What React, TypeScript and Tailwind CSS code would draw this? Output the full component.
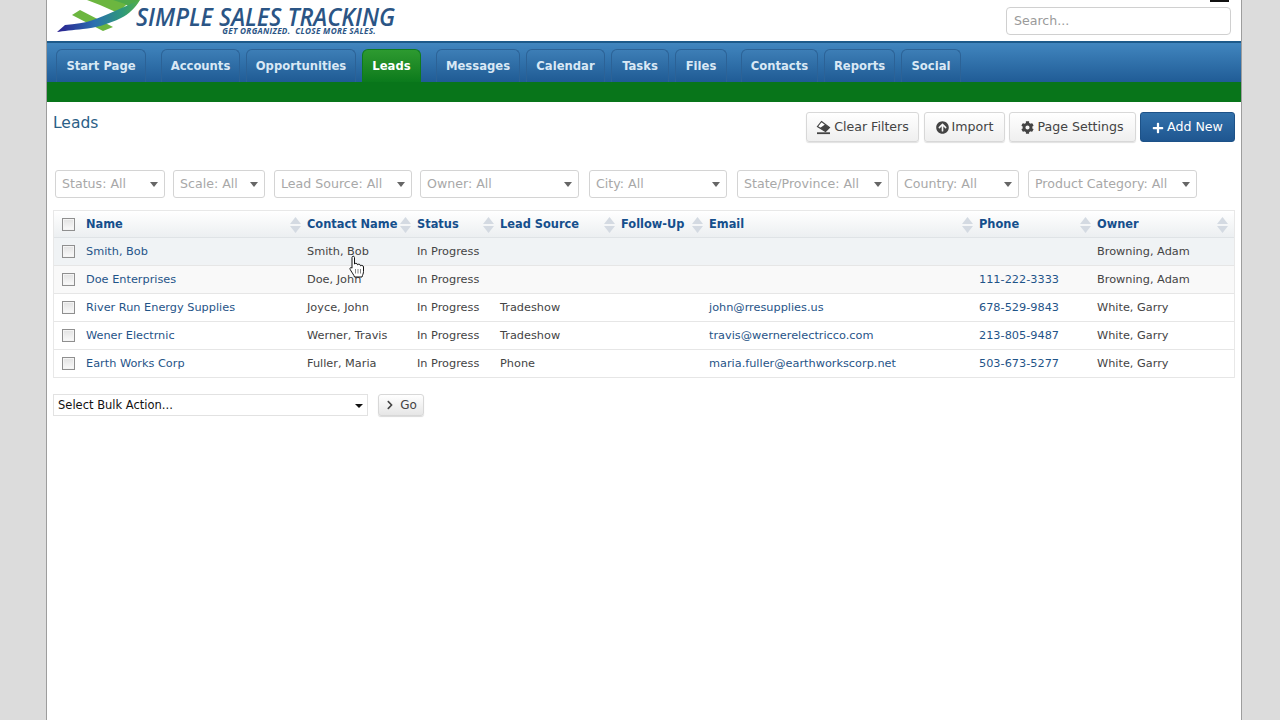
import React from "react";
import { FaCog, FaArrowCircleUp, FaPlus, FaChevronRight } from "react-icons/fa";

const font = "[font-family:'DejaVu_Sans',Verdana,sans-serif]";

const tabs = [
  { t: "Start Page", c: "w-[90px] mr-[15px]" },
  { t: "Accounts", c: "w-[79px] mr-[6px]" },
  { t: "Opportunities", c: "w-[110px] mr-[6px]" },
  { t: "Leads", c: "w-[59px] mr-[15px]", active: true },
  { t: "Messages", c: "w-[84px] mr-[6px]" },
  { t: "Calendar", c: "w-[79px] mr-[6px]" },
  { t: "Tasks", c: "w-[58px] mr-[6px]" },
  { t: "Files", c: "w-[52px] mr-[14px]" },
  { t: "Contacts", c: "w-[77px] mr-[6px]" },
  { t: "Reports", c: "w-[71px] mr-[6px]" },
  { t: "Social", c: "w-[60px]" },
];

const filters = [
  { t: "Status: All", c: "w-[110px] mr-[8px]" },
  { t: "Scale: All", c: "w-[92px] mr-[9px]" },
  { t: "Lead Source: All", c: "w-[138px] mr-[8px]" },
  { t: "Owner: All", c: "w-[159px] mr-[10px]" },
  { t: "City: All", c: "w-[138px] mr-[10px]" },
  { t: "State/Province: All", c: "w-[152px] mr-[8px]" },
  { t: "Country: All", c: "w-[122px] mr-[9px]" },
  { t: "Product Category: All", c: "w-[169px]" },
];

const cols = "grid grid-cols-[32px_221px_110px_83px_121px_88px_270px_118px_137px]";

const headers = ["Name", "Contact Name", "Status", "Lead Source", "Follow-Up", "Email", "Phone", "Owner"];

const rows = [
  ["Smith, Bob", "Smith, Bob", "In Progress", "", "", "", "", "Browning, Adam"],
  ["Doe Enterprises", "Doe, John", "In Progress", "", "", "", "111-222-3333", "Browning, Adam"],
  ["River Run Energy Supplies", "Joyce, John", "In Progress", "Tradeshow", "", "john@rresupplies.us", "678-529-9843", "White, Garry"],
  ["Wener Electrnic", "Werner, Travis", "In Progress", "Tradeshow", "", "travis@wernerelectricco.com", "213-805-9487", "White, Garry"],
  ["Earth Works Corp", "Fuller, Maria", "In Progress", "Phone", "", "maria.fuller@earthworkscorp.net", "503-673-5277", "White, Garry"],
];

function Check() {
  return <span className="ml-[8px] block h-[13px] w-[13px] border border-[#8f8f8f] bg-gradient-to-b from-[#e2e2e2] to-[#fafafa] shadow-[inset_0_0_0_1px_#f4f4f4]" />;
}

function Sort() {
  return (
    <svg width="11" height="16" viewBox="0 0 11 16" className="absolute right-[6px] top-[6px]">
      <path d="M5.500 0 11 7H0z" fill="#d4dae2" />
      <path d="M0 9h11l-5.500 7z" fill="#d4dae2" />
    </svg>
  );
}

function Logo() {
  return (
    <svg width="90" height="36" viewBox="0 0 90 36" className="shrink-0">
      <defs>
        <linearGradient id="sw" x1="0" x2="1" y1="0" y2="0">
          <stop offset="0" stopColor="#2b1f8f" />
          <stop offset="0.45" stopColor="#2a6fb0" />
          <stop offset="0.8" stopColor="#2f9a78" />
          <stop offset="1" stopColor="#56b047" />
        </linearGradient>
      </defs>
      <path d="M17 15 25 10 58 27 48 31Z" fill="#6cb63f" />
      <path d="M32 0H62L73 3 63 13 45 5Z" fill="#6cb63f" />
      <path d="M58 0H85L76 8 70 4Z" fill="#4ea94a" />
      <path d="M2 32 10 25C20 24 30 23 38 20 50 16 66 8 85 0 80 8 74 14 66 18 54 24 40 28 28 29 18 30 8 31 2 32Z" fill="url(#sw)" />
    </svg>
  );
}

function Eraser() {
  return (
    <svg width="15" height="15" viewBox="0 0 15 15" className="shrink-0">
      <path d="M5.500 1.500 13.500 7.500 9.500 11.500 1.500 6.500Z" fill="#fff" stroke="#444" strokeWidth="1.200" />
      <path d="M4 8 9.500 11.500 13.500 7.500 9 4.500Z" fill="#444" />
      <path d="M1 13.200H14" stroke="#444" strokeWidth="1.800" />
    </svg>
  );
}

function Hand() {
  return (
    <svg width="17" height="23" viewBox="0 0 17 23" className="absolute left-[349px] top-[255px]">
      <path
        d="M3 2.500C3 .8 5.500 .8 5.500 2.500V9C6 8 8.500 8 8.500 9.800 9 8.800 11.500 9 11.500 10.800 12 10 14.500 10.200 14.500 12V16.500C14.500 18.500 13.500 20 13 22H5.500C4.800 19.800 3.500 18.500 1.200 14.500.3 12.800 2.200 11.800 3 13.200Z"
        fill="#fff"
        stroke="#111"
        strokeWidth="1"
      />
      <path d="M6.500 14V18.500M9 14V18.500M11.500 14V18.500" stroke="#555" strokeWidth="0.700" />
    </svg>
  );
}

const btn =
  "flex h-[30px] items-center justify-center gap-[3px] rounded-[3px] border border-[#d8d8d8] bg-gradient-to-b from-white to-[#efefef] pt-[1px] text-[12.600px] text-[#444] shadow-[0_1px_1px_rgba(0,0,0,0.12)]";

export default function App() {
  return (
    <div className={`relative min-h-[720px] overflow-hidden bg-[#dcdcdc] ${font}`}>
      <div className="ml-[46px] h-[720px] w-[1196px] border-x border-[#9d9d9d] bg-white">
        <header className="relative flex h-[41px] items-start justify-between overflow-hidden pl-[8px] pr-[10px]">
          <div className="flex items-start">
            <Logo />
            <div className="-ml-[9px] w-[260px]">
              <div className="mt-[6px] origin-left scale-x-[0.937] whitespace-nowrap text-[25px] font-semibold italic leading-[21px] text-[#2b5585] [font-family:'Open_Sans',sans-serif]">
                SIMPLE SALES TRACKING
              </div>
              <div className="whitespace-nowrap pr-[20px] text-right text-[8.200px] font-bold italic leading-[8px] tracking-[0.3px] text-[#2b5585] [font-family:'Open_Sans',sans-serif]">
                GET ORGANIZED.&nbsp; CLOSE MORE SALES.
              </div>
            </div>
          </div>
          <div className="mt-[7px] flex h-[28px] w-[225px] items-center rounded-[4px] border border-[#d0d0d0] px-[7px] text-[12.600px] text-[#9a9a9a]">
            Search...
          </div>
          <span className="absolute right-[12px] top-0 h-[2px] w-[19px] bg-[#111]" />
        </header>
        <nav className="h-[60px] border-t-2 border-[#1d5a8a]">
          <div className="flex h-[39px] items-end bg-gradient-to-b from-[#4186bf] to-[#205c96] pl-[9px]">
            {tabs.map((x) => (
              <div
                key={x.t}
                className={`flex h-[33px] items-center justify-center rounded-t-[6px] border-x border-t pt-[1px] text-[11.600px] font-bold ${x.c} ${
                  x.active
                    ? "border-[#0f7a1c] bg-gradient-to-b from-[#2d9a30] to-[#0a7a1c] text-white"
                    : "border-[#2c6296] bg-gradient-to-b from-[#3d7eb6] to-[#1f5b94] text-[#d9e8f5]"
                }`}
              >
                {x.t}
              </div>
            ))}
          </div>
          <div className="h-[20px] bg-[#08751a]" />
        </nav>
        <main className="px-[6px]">
          <div className="flex items-start justify-between pt-[11px]">
            <h1 className="mt-[1px] text-[15.500px] leading-[20px] text-[#2b5f87]">Leads</h1>
            <div className="flex">
              <button className={`${btn} mr-[5px] w-[113px]`}>
                <Eraser /> Clear Filters
              </button>
              <button className={`${btn} mr-[4px] w-[81px]`}>
                <FaArrowCircleUp className="h-[13px] w-[13px] text-[#444]" /> Import
              </button>
              <button className={`${btn} mr-[4px] w-[127px]`}>
                <FaCog className="h-[13px] w-[13px] text-[#444]" /> Page Settings
              </button>
              <button className="flex h-[30px] w-[95px] items-center justify-center gap-[3px] rounded-[3px] border border-[#1d5288] bg-gradient-to-b from-[#3271ab] to-[#1f5690] pt-[1px] text-[12.600px] text-white">
                <FaPlus className="h-[12px] w-[12px]" /> Add New
              </button>
            </div>
          </div>
          <div className="mt-[28px] flex pl-[2px]">
            {filters.map((f) => (
              <div key={f.t} className={`relative flex h-[28px] items-center rounded-[3px] border border-[#d4d4d4] pl-[6px] pt-[1px] text-[12.600px] text-[#a8a8a8] ${f.c}`}>
                {f.t}
                <span className="absolute right-[6px] top-[11px] h-0 w-0 border-x-[4px] border-t-[5px] border-x-transparent border-t-[#666]" />
              </div>
            ))}
          </div>
          <div className="mt-[12px] border-x border-t border-[#e8e8e8]">
            <div className={`${cols} h-[27px] items-center border-b border-[#dfe3e6] bg-gradient-to-b from-white to-[#eceff1] text-[11.400px] font-bold text-[#154f8c]`}>
              <Check />
              {headers.map((h) => (
                <div key={h} className="relative flex h-full items-center whitespace-nowrap pt-[1px]">
                  {h}
                  <Sort />
                </div>
              ))}
            </div>
            {rows.map((r, i) => (
              <div
                key={r[0]}
                className={`${cols} h-[28px] items-center border-b border-[#e6e6e6] text-[11.300px] text-[#444] ${
                  i === 0 ? "bg-[#f0f3f5]" : i === 1 ? "bg-[#f9f9f9]" : "bg-white"
                }`}
              >
                <Check />
                {r.map((c, j) => (
                  <div key={j} className={`whitespace-nowrap pt-[2px] ${j === 0 || j === 5 || j === 6 ? "text-[#1f5488]" : ""}`}>
                    {c}
                  </div>
                ))}
              </div>
            ))}
          </div>
          <div className="mt-[16px] flex items-start">
            <div className="relative h-[22px] w-[315px] border border-[#e2e2e2] pl-[4px] text-[11.500px] leading-[21px] text-[#111]">
              Select Bulk Action...
              <span className="absolute right-[4px] top-[9px] h-0 w-0 border-x-[4px] border-t-[4px] border-x-transparent border-t-[#111]" />
            </div>
            <button className="ml-[10px] flex h-[22px] w-[46px] items-center justify-center gap-[5px] rounded-[3px] border border-[#d8d8d8] bg-gradient-to-b from-white to-[#e6e6e6] text-[12px] text-[#444] shadow-[0_1px_1px_rgba(0,0,0,0.15)]">
              <FaChevronRight className="h-[10px] w-[10px]" /> Go
            </button>
          </div>
        </main>
      </div>
      <Hand />
    </div>
  );
}
